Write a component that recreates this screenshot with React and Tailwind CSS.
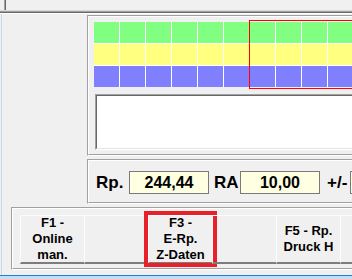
import React from 'react';

function Etched({ className, children }) {
  return (
    <div className={`border border-t-[#a0a0a0] border-l-[#a0a0a0] border-b-white border-r-white ${className}`}>
      <div className="h-full border border-t-white border-l-white border-b-[#a0a0a0] border-r-[#a0a0a0] relative">
        {children}
      </div>
    </div>
  );
}

const rows = ['bg-[#80ff80]', 'bg-[#ffff80]', 'bg-[#8080ff]'];
const cols = Array.from({ length: 10 });

const buttons = [
  ['F1 -', 'Online', 'man.'],
  [],
  ['F3 -', 'E-Rp.', 'Z-Daten'],
  [],
  ['F5 - Rp.', 'Druck H'],
  [],
];

export default function App() {
  return (
    <div className="w-[352px] h-[279px] overflow-hidden bg-[#f0f0f0] flex flex-col font-['Liberation_Sans',Arial,sans-serif] text-black">
      {/* top panel */}
      <div className="h-[10px] shrink-0 pl-[4px]">
        <div className="h-full border-l border-[#a0a0a0]">
          <div className="h-full border-l border-[#696969]" />
        </div>
      </div>
      <div className="h-px shrink-0 bg-[#d8d8d8]" />
      <div className="h-px shrink-0 bg-[#a0a0a0]" />
      <div className="h-px shrink-0 bg-[#696969]" />
      <div className="h-px shrink-0 bg-white" />

      {/* body */}
      <div className="h-[261px] shrink-0 ml-[1px] border-l border-[#c4d9ee]">
        <Etched className="ml-[85px] mt-[1px] w-[300px] h-[141px]">
          <div className="pl-[5px] pt-[5px]">
            <div className="flex flex-col gap-px bg-white w-max">
              {rows.map((r) => (
                <div key={r} className="flex gap-px">
                  {cols.map((_, i) => (
                    <div key={i} className={`w-[25px] h-[21px] shrink-0 ${r}`} />
                  ))}
                </div>
              ))}
            </div>
            <div className="ml-px mt-[7px] h-[56px] border border-t-[#a0a0a0] border-l-[#a0a0a0] border-b-white border-r-white">
              <div className="h-full border border-t-[#696969] border-l-[#696969] border-b-[#e3e3e3] border-r-[#e3e3e3] bg-white" />
            </div>
          </div>
          <div className="absolute left-[160px] top-[3px] w-[200px] h-[69px] border border-[#ff0000]" />
        </Etched>

        <Etched className="ml-[85px] mt-[3px] w-[400px] h-[45px]">
          <div className="pl-[7px] pt-[10px] flex items-center h-[33px] text-[16px] font-bold whitespace-nowrap">
            <span className="w-[33px] shrink-0 text-[17px]">Rp.</span>
            <div className="w-[80px] h-[23px] shrink-0 border border-[#7a7a7a] bg-[#ffffe1] flex items-center justify-center">244,44</div>
            <span className="ml-[5px] w-[26px] shrink-0 text-[17px]">RA</span>
            <div className="w-[80px] h-[23px] shrink-0 border border-[#7a7a7a] bg-[#ffffe1] flex items-center justify-center">10,00</div>
            <span className="ml-[7px] w-[23px] shrink-0 text-[17px]">+/-</span>
            <div className="w-[80px] h-[23px] shrink-0 border border-[#7a7a7a] bg-[#ffffe1]" />
          </div>
        </Etched>

        <Etched className="ml-[9px] mt-[3px] w-[400px] h-[63px]">
          <div className="pl-[7px] pt-[6px] flex">
            {buttons.map((lines, i) => (
              <div
                key={i}
                className="relative w-[64px] h-[49px] shrink-0 border-l border-t border-[#fbfbfb] border-b-2 border-b-[#7d7d7d] flex flex-col items-center justify-center text-[13px] leading-[16px] font-bold text-center whitespace-nowrap"
              >
                {lines.map((l) => (
                  <div key={l}>{l}</div>
                ))}
                {i === 2 && (
                  <div className="absolute -left-[5px] -top-[5px] -right-[5px] -bottom-[5px] border-4 border-[#e8202a]" />
                )}
              </div>
            ))}
          </div>
        </Etched>
      </div>

      <div className="h-px shrink-0 bg-[#2b79c2]" />
      <div className="flex-1 bg-[#c3def4]" />
    </div>
  );
}
